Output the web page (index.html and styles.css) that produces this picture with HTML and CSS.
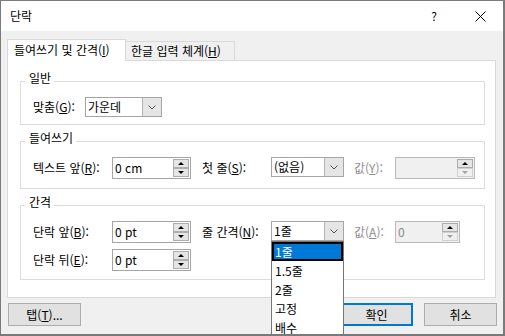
FILE: index.html
```html
<!DOCTYPE html>
<html lang="ko">
    <head>
        <meta charset="UTF-8">
        <title>단락</title>
        <link rel="stylesheet" href="styles.css">
    </head>
    <body>
        <div class="dialog">
            <div class="titlebar">
                <span class="title">단락</span>
                <span class="caption-btn">?</span>
                <span class="caption-btn">
                    <svg width="11" height="11" viewBox="0 0 11 11"><path d="M0.5 0.5L10.5 10.5M10.5 0.5L0.5 10.5" stroke="#000" stroke-width="1"/></svg>
                </span>
            </div>

            <div class="content">
                <div class="tabs">
                    <div class="tab active">들여쓰기 및 간격(<u>I</u>)</div>
                    <div class="tab">한글 입력 체계(<u>H</u>)</div>
                </div>

                <div class="panel">
                    <div class="group group-general">
                        <div class="legend">일반</div>
                        <div class="row">
                            <span class="lbl lbl-short">맞춤(<u>G</u>):</span>
                            <div class="combo combo-wide">
                                <span class="combo-val">가운데</span>
                                <span class="combo-btn"><svg width="8" height="5" viewBox="0 0 8 5"><path d="M0.5 0.5L4 4L7.5 0.5" fill="none" stroke="#555"/></svg></span>
                            </div>
                        </div>
                    </div>

                    <div class="group group-indent">
                        <div class="legend">들여쓰기</div>
                        <div class="row">
                            <span class="lbl lbl-first">텍스트 앞(<u>R</u>):</span>
                            <div class="spin">
                                <span class="spin-val">0 cm</span>
                                <span class="spin-btns"><span class="sbtn"><i class="arr up"></i></span><span class="sbtn"><i class="arr down"></i></span></span>
                            </div>
                            <span class="lbl lbl-second">첫 줄(<u>S</u>):</span>
                            <div class="combo">
                                <span class="combo-val">(없음)</span>
                                <span class="combo-btn"><svg width="8" height="5" viewBox="0 0 8 5"><path d="M0.5 0.5L4 4L7.5 0.5" fill="none" stroke="#555"/></svg></span>
                            </div>
                            <span class="lbl lbl-third disabled">값(<u>Y</u>):</span>
                            <div class="spin spin-off spin-long">
                                <span class="spin-val"></span>
                                <span class="spin-btns"><span class="sbtn"><i class="arr up"></i></span><span class="sbtn sbtn-off"><i class="arr down"></i></span></span>
                            </div>
                        </div>
                    </div>

                    <div class="group group-spacing">
                        <div class="legend">간격</div>
                        <div class="row">
                            <span class="lbl lbl-first">단락 앞(<u>B</u>):</span>
                            <div class="spin">
                                <span class="spin-val">0 pt</span>
                                <span class="spin-btns"><span class="sbtn"><i class="arr up"></i></span><span class="sbtn"><i class="arr down"></i></span></span>
                            </div>
                            <span class="lbl lbl-second">줄 간격(<u>N</u>):</span>
                            <div class="combo">
                                <span class="combo-val">1줄</span>
                                <span class="combo-btn"><svg width="8" height="5" viewBox="0 0 8 5"><path d="M0.5 0.5L4 4L7.5 0.5" fill="none" stroke="#555"/></svg></span>
                                <ul class="dropdown">
                                    <li class="item selected">1줄</li>
                                    <li class="item">1.5줄</li>
                                    <li class="item">2줄</li>
                                    <li class="item">고정</li>
                                    <li class="item">배수</li>
                                </ul>
                            </div>
                            <span class="lbl lbl-third disabled">값(<u>A</u>):</span>
                            <div class="spin spin-off spin-short">
                                <span class="spin-val">0</span>
                                <span class="spin-btns"><span class="sbtn"><i class="arr up"></i></span><span class="sbtn sbtn-off"><i class="arr down"></i></span></span>
                            </div>
                        </div>
                        <div class="row">
                            <span class="lbl lbl-first">단락 뒤(<u>E</u>):</span>
                            <div class="spin">
                                <span class="spin-val">0 pt</span>
                                <span class="spin-btns"><span class="sbtn"><i class="arr up"></i></span><span class="sbtn"><i class="arr down"></i></span></span>
                            </div>
                        </div>
                    </div>
                </div>

                <div class="footer">
                    <button class="btn">탭(<u>T</u>)...</button>
                    <button class="btn btn-ok">확인</button>
                    <button class="btn btn-cancel">취소</button>
                </div>
            </div>
        </div>
    </body>
</html>
```

FILE: styles.css
```css
html, body {
    margin: 0;
    overflow: hidden;
}

.dialog {
    width: 505px;
    height: 336px;
    box-sizing: border-box;
    border: solid #7a7a7a;
    border-width: 1px 2px 2px 1px;
    background: #f0f0f0;
    font-family: "Noto Sans CJK KR", "Noto Sans", sans-serif;
    font-size: 12px;
    line-height: 16px;
    color: #000;
    overflow: hidden;
}

.titlebar {
    display: flex;
    align-items: center;
    height: 30px;
    background: #fff;
}

.title {
    flex: 1;
    padding-left: 9px;
}

.caption-btn {
    width: 46px;
    height: 30px;
    display: flex;
    align-items: center;
    justify-content: center;
}

.content {
    padding: 8px 7px 0 6px;
}

/* tabs */
.tabs {
    display: flex;
    align-items: flex-end;
    height: 21px;
}

.tab {
    height: 19px;
    width: 109px;
    box-sizing: border-box;
    border: 1px solid #d9d9d9;
    border-bottom: none;
    border-left: none;
    padding-left: 5px;
    line-height: 18px;
    background: #f0f0f0;
    white-space: nowrap;
}

.tab.active {
    position: relative;
    z-index: 1;
    height: 22px;
    width: 119px;
    margin-bottom: -1px;
    border-left: 1px solid #d9d9d9;
    padding-left: 6px;
    line-height: 20px;
    background: #fff;
}

.panel {
    width: 489px;
    height: 238px;
    box-sizing: border-box;
    border: 1px solid #d9d9d9;
    background: #fff;
    padding: 20px 10px 0 12px;
}

/* group boxes */
.group {
    box-sizing: border-box;
    border: 1px solid #dcdcdc;
    padding-left: 12px;
    margin-top: 16px;
}

.group-general {
    margin-top: 0;
    height: 44px;
}

.group-indent {
    height: 48px;
}

.group-spacing {
    height: 75px;
}

.legend {
    width: fit-content;
    margin: -12px 0 0 -8px;
    padding: 0 3px 0 4px;
    background: #fff;
}

.row {
    display: flex;
    align-items: flex-start;
    margin-top: 11px;
}

.row + .row {
    margin-top: 6px;
}

.lbl {
    line-height: 22px;
    white-space: nowrap;
}

.group-general .lbl {
    line-height: 20px;
}

.lbl-short {
    width: 52px;
}

.lbl-first {
    width: 79px;
}

.lbl-second {
    width: 69px;
    margin-left: 11px;
}

.lbl-third {
    width: 41px;
    margin-left: 10px;
}

.disabled {
    color: #8d8d8d;
}

/* combo box */
.combo {
    position: relative;
    display: flex;
    width: 73px;
    height: 20px;
    box-sizing: border-box;
    border: 1px solid #a5a5a5;
    background: #fff;
}

.combo-wide {
    width: 77px;
}

.combo-val {
    flex: 1;
    padding-left: 2px;
    line-height: 18px;
    white-space: nowrap;
}

.combo-btn {
    width: 19px;
    box-sizing: border-box;
    border-left: 1px solid #b4b4b4;
    background: #e5e5e5;
    display: flex;
    align-items: center;
    justify-content: center;
}

.dropdown {
    position: absolute;
    z-index: 5;
    left: -1px;
    top: calc(100% + 1px);
    width: 73px;
    box-sizing: border-box;
    margin: 0;
    padding: 0;
    list-style: none;
    border: 1px solid #767676;
    background: #fff;
}

.item {
    height: 19px;
    padding-left: 3px;
    line-height: 19px;
}

.item.selected {
    background: #0078d7;
    color: #fff;
    box-shadow: inset 0 0 0 2px #000;
}

/* spin box */
.spin {
    display: flex;
    width: 79px;
    height: 22px;
    box-sizing: border-box;
    border: 1px solid #a5a5a5;
    background: #fff;
}

.spin-long {
    width: 80px;
}

.spin-short {
    width: 65px;
}

.spin-off {
    background: #f0f0f0;
    border-color: #b9b9b9;
    color: #8d8d8d;
}

.spin-val {
    flex: 1;
    padding-left: 2px;
    line-height: 20px;
}

.spin-btns {
    display: flex;
    flex-direction: column;
    padding: 1px;
    width: 16px;
}

.sbtn {
    height: 9px;
    box-sizing: border-box;
    border: 1px solid #adadad;
    background: #e5e5e5;
    display: flex;
    align-items: center;
    justify-content: center;
}

.sbtn-off {
    border-color: #d0d0d0;
    background: #f0f0f0;
}

.arr {
    width: 0;
    height: 0;
    border-left: 3px solid transparent;
    border-right: 3px solid transparent;
}

.arr.up {
    border-bottom: 3px solid #000;
}

.arr.down {
    border-top: 3px solid #000;
}

.sbtn-off .arr.down {
    border-top-color: #a0a0a0;
}

/* bottom buttons */
.footer {
    display: flex;
    margin-top: 5px;
    margin-right: -1px;
    padding-left: 1px;
}

.btn {
    width: 73px;
    height: 23px;
    box-sizing: border-box;
    padding: 0;
    border: 1px solid #adadad;
    background: #e1e1e1;
    font: inherit;
    color: #000;
}

.btn-ok {
    margin-left: auto;
    border: 2px solid #0078d7;
}

.btn-cancel {
    margin-left: 11px;
}
```
